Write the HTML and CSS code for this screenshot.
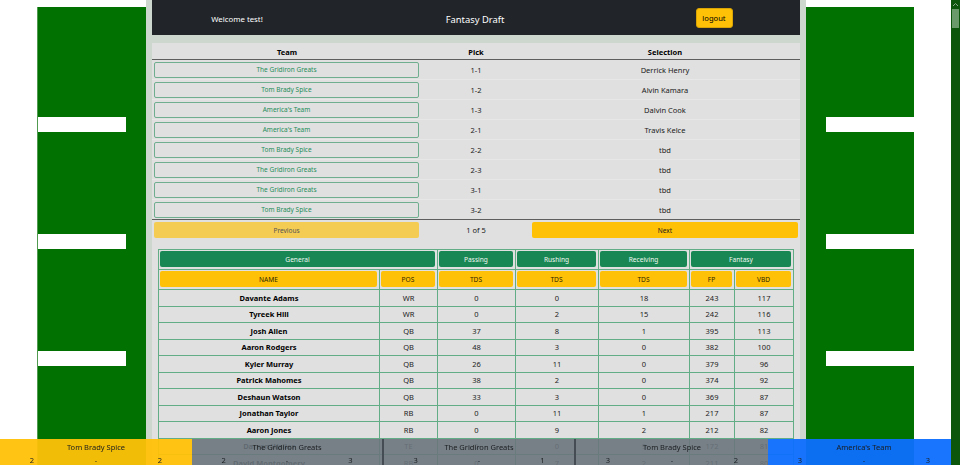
FILE: index.html
```html
<!DOCTYPE html>
<html lang="en">
<head>
<meta charset="utf-8">
<title>Fantasy Draft</title>
<link rel="stylesheet" href="styles.css">
</head>
<body>
<div class="page">
  <div class="field field-left">
    <div class="yard"></div><div class="yard"></div><div class="yard"></div>
  </div>
  <main class="main">
    <nav class="navbar">
      <div class="welcome">Welcome test!</div>
      <div class="brand">Fantasy Draft</div>
      <div class="nav-end"><button class="logout">logout</button></div>
    </nav>
    <section class="card">
      <div class="draft">
        <div class="dh">Team</div><div class="dh">Pick</div><div class="dh">Selection</div>

        <div class="dc team-cell"><button class="team-btn">The Gridiron Greats</button></div><div class="dc">1-1</div><div class="dc">Derrick Henry</div>
        <div class="dc team-cell"><button class="team-btn">Tom Brady Spice</button></div><div class="dc">1-2</div><div class="dc">Alvin Kamara</div>
        <div class="dc team-cell"><button class="team-btn">America's Team</button></div><div class="dc">1-3</div><div class="dc">Dalvin Cook</div>
        <div class="dc team-cell"><button class="team-btn">America's Team</button></div><div class="dc">2-1</div><div class="dc">Travis Kelce</div>
        <div class="dc team-cell"><button class="team-btn">Tom Brady Spice</button></div><div class="dc">2-2</div><div class="dc">tbd</div>
        <div class="dc team-cell"><button class="team-btn">The Gridiron Greats</button></div><div class="dc">2-3</div><div class="dc">tbd</div>
        <div class="dc team-cell"><button class="team-btn">The Gridiron Greats</button></div><div class="dc">3-1</div><div class="dc">tbd</div>
        <div class="dc team-cell last"><button class="team-btn">Tom Brady Spice</button></div><div class="dc last">3-2</div><div class="dc last">tbd</div>

        <div class="pc team-cell"><button class="page-btn prev">Previous</button></div>
        <div class="pc">1 of 5</div>
        <div class="pc next-cell"><button class="page-btn next">Next</button></div>
      </div>

      <div class="stats-wrap">
        <div class="stats">
          <div class="sh span2"><span class="box green">General</span></div>
          <div class="sh"><span class="box green">Passing</span></div>
          <div class="sh"><span class="box green">Rushing</span></div>
          <div class="sh"><span class="box green">Receiving</span></div>
          <div class="sh span2"><span class="box green">Fantasy</span></div>

          <div class="sh"><span class="box yellow">NAME</span></div>
          <div class="sh"><span class="box yellow">POS</span></div>
          <div class="sh"><span class="box yellow">TDS</span></div>
          <div class="sh"><span class="box yellow">TDS</span></div>
          <div class="sh"><span class="box yellow">TDS</span></div>
          <div class="sh"><span class="box yellow">FP</span></div>
          <div class="sh"><span class="box yellow">VBD</span></div>

          <div class="sd name">Davante Adams</div><div class="sd">WR</div><div class="sd">0</div><div class="sd">0</div><div class="sd">18</div><div class="sd">243</div><div class="sd">117</div>
          <div class="sd name">Tyreek Hill</div><div class="sd">WR</div><div class="sd">0</div><div class="sd">2</div><div class="sd">15</div><div class="sd">242</div><div class="sd">116</div>
          <div class="sd name">Josh Allen</div><div class="sd">QB</div><div class="sd">37</div><div class="sd">8</div><div class="sd">1</div><div class="sd">395</div><div class="sd">113</div>
          <div class="sd name">Aaron Rodgers</div><div class="sd">QB</div><div class="sd">48</div><div class="sd">3</div><div class="sd">0</div><div class="sd">382</div><div class="sd">100</div>
          <div class="sd name">Kyler Murray</div><div class="sd">QB</div><div class="sd">26</div><div class="sd">11</div><div class="sd">0</div><div class="sd">379</div><div class="sd">96</div>
          <div class="sd name">Patrick Mahomes</div><div class="sd">QB</div><div class="sd">38</div><div class="sd">2</div><div class="sd">0</div><div class="sd">374</div><div class="sd">92</div>
          <div class="sd name">Deshaun Watson</div><div class="sd">QB</div><div class="sd">33</div><div class="sd">3</div><div class="sd">0</div><div class="sd">369</div><div class="sd">87</div>
          <div class="sd name">Jonathan Taylor</div><div class="sd">RB</div><div class="sd">0</div><div class="sd">11</div><div class="sd">1</div><div class="sd">217</div><div class="sd">87</div>
          <div class="sd name">Aaron Jones</div><div class="sd">RB</div><div class="sd">0</div><div class="sd">9</div><div class="sd">2</div><div class="sd">212</div><div class="sd">82</div>
          <div class="sd name">Darren Waller</div><div class="sd">TE</div><div class="sd">0</div><div class="sd">0</div><div class="sd">9</div><div class="sd">172</div><div class="sd">81</div>
          <div class="sd name">David Montgomery</div><div class="sd">RB</div><div class="sd">0</div><div class="sd">7</div><div class="sd">2</div><div class="sd">211</div><div class="sd">80</div>
          <div class="sd name">Mike Evans</div><div class="sd">WR</div><div class="sd">0</div><div class="sd">0</div><div class="sd">13</div><div class="sd">220</div><div class="sd">78</div>
        </div>
      </div>
    </section>
  </main>
  <div class="field field-right">
    <div class="yard"></div><div class="yard"></div><div class="yard"></div>
  </div>
</div>

<div class="teambar">
  <div class="team t-yellow">
    <div class="team-name">Tom Brady Spice</div>
    <div class="team-score"><span>2</span><span>-</span><span>2</span></div>
  </div>
  <div class="team t-gray sep">
    <div class="team-name">The Gridiron Greats</div>
    <div class="team-score"><span>2</span><span>-</span><span>3</span></div>
  </div>
  <div class="team t-gray sep">
    <div class="team-name">The Gridiron Greats</div>
    <div class="team-score"><span>3</span><span>-</span><span>1</span></div>
  </div>
  <div class="team t-gray">
    <div class="team-name">Tom Brady Spice</div>
    <div class="team-score"><span>3</span><span>-</span><span>2</span></div>
  </div>
  <div class="team t-blue">
    <div class="team-name">America's Team</div>
    <div class="team-score"><span>3</span><span>-</span><span>3</span></div>
  </div>
</div>

<div class="scrollbar">
  <div class="sb-arrow"><svg width="9" height="9" viewBox="0 0 9 9"><path d="M2 6 L4.5 3.5 L7 6" fill="none" stroke="#8aa88a" stroke-width="1"/></svg></div>
  <div class="sb-thumb"></div>
</div>
</body>
</html>
```

FILE: styles.css
```css
html, body {
  margin: 0;
  padding: 0;
  overflow: hidden;
  background: #ffffff;
}

body {
  width: 960px;
  height: 465px;
  font-family: "Noto Sans", "DejaVu Sans", sans-serif;
  color: #111111;
}

.page {
  display: flex;
  width: 951px;
  padding: 0 37px;
  box-sizing: border-box;
}

/* football field sides */
.field {
  flex: none;
  margin-top: 7px;
  height: 600px;
  background: #017101;
  display: flex;
  flex-direction: column;
  padding-top: 110px;
  gap: 102px;
  box-sizing: border-box;
}

.field-left {
  width: 109px;
  align-items: flex-start;
  border-left: 1px solid #4f9a4f;
}

.field-right {
  width: 108px;
  align-items: flex-end;
}

.yard {
  flex: none;
  width: 88px;
  height: 15px;
  background: #ffffff;
}

/* main column */
.main {
  flex: none;
  width: 660px;
  min-height: 600px;
  background: #cdd7cd;
  padding: 0 6px;
  box-sizing: border-box;
}

.navbar {
  height: 35px;
  background: #212529;
  display: grid;
  grid-template-columns: 170px 1fr 172px;
  align-items: center;
  justify-items: center;
}

.welcome {
  color: #ffffff;
  font-size: 7.8px;
  padding-top: 3px;
}

.brand {
  color: #ffffff;
  font-size: 9.4px;
  padding-top: 3px;
}

.nav-end {
  padding-top: 1px;
}

.logout {
  display: block;
  width: 37px;
  height: 20px;
  padding: 0;
  background: #ffc107;
  border: 1px solid #d9a406;
  border-radius: 3px;
  font-family: "Noto Sans", "DejaVu Sans", sans-serif;
  font-size: 7.6px;
  color: #000000;
}

.card {
  margin-top: 8px;
  background: #e0e0e0;
  padding-bottom: 20px;
}

/* draft order */
.draft {
  display: grid;
  grid-template-columns: 270px 108px 270px;
  font-size: 7.5px;
}

.dh {
  height: 17px;
  box-sizing: border-box;
  border-bottom: 1px solid #5e5e5e;
  padding-top: 2px;
  font-weight: 700;
  display: flex;
  align-items: center;
  justify-content: center;
  color: #000000;
}

.dc {
  height: 20px;
  box-sizing: border-box;
  border-bottom: 1px solid #e7e7e7;
  display: flex;
  align-items: center;
  justify-content: center;
  color: #1a1a1a;
}

.dc.last {
  border-bottom: 1px solid #5e5e5e;
}

.team-cell {
  padding: 0 3px 0 2px;
  justify-content: stretch;
}

.team-btn {
  display: block;
  width: 100%;
  height: 16px;
  padding: 0;
  background: transparent;
  border: 1px solid #6fae8f;
  border-radius: 2px;
  color: #1f8d59;
  font-family: "Noto Sans", "DejaVu Sans", sans-serif;
  font-size: 6.5px;
}

.pc {
  height: 20px;
  display: flex;
  align-items: center;
  justify-content: center;
  color: #1a1a1a;
}

.next-cell {
  padding: 0 2px 0 2px;
}

.page-btn {
  display: block;
  width: 100%;
  height: 16px;
  padding: 0;
  border: none;
  border-radius: 2px;
  font-family: "Noto Sans", "DejaVu Sans", sans-serif;
  font-size: 6.5px;
}

.prev {
  background: #f4cc53;
  color: #555555;
}

.next {
  background: #ffc107;
  color: #1a1a1a;
}

/* stats */
.stats-wrap {
  padding: 9px 6px 0 6px;
}

.stats {
  display: grid;
  grid-template-columns: 220px 57px 77px 82px 90px 44px 58px;
  grid-template-rows: 19px 19px;
  grid-auto-rows: 15.5px;
  gap: 1px;
  padding: 1px;
  width: max-content;
  background: #62ad86;
  font-size: 7.5px;
}

.sh {
  background: #e0e0e0;
  padding: 1px 2px 2px 1px;
  display: flex;
}

.span2 {
  grid-column: span 2;
}

.box {
  flex: 1;
  display: flex;
  align-items: center;
  justify-content: center;
  border-radius: 2px;
  font-size: 6.6px;
}

.box.green {
  background: #198754;
  color: #f0f7f2;
}

.box.yellow {
  background: #ffc107;
  color: #2e2600;
}

.sd {
  background: #e0e0e0;
  display: flex;
  align-items: center;
  justify-content: center;
  color: #222222;
}

.sd.name {
  font-weight: 700;
  color: #000000;
}

/* bottom team bar */
.teambar {
  position: fixed;
  left: 0;
  bottom: 0;
  width: 960px;
  height: 26px;
  display: grid;
  grid-template-columns: repeat(5, 192px);
  font-size: 7.5px;
  color: #1a1d20;
}

.team {
  display: flex;
  flex-direction: column;
  box-sizing: border-box;
}

.t-yellow { background: rgba(255, 193, 7, 0.95); }
.t-gray { background: rgba(108, 117, 125, 0.9); }
.t-blue { background: rgba(13, 110, 253, 0.95); }

.sep {
  border-right: 2px solid #454c53;
}

.team-name {
  height: 16px;
  display: flex;
  align-items: center;
  justify-content: center;
}

.team-score {
  height: 10px;
  display: grid;
  grid-template-columns: repeat(3, 1fr);
  align-items: center;
  justify-items: center;
}

/* window scrollbar (green themed) */
.scrollbar {
  position: fixed;
  top: 0;
  right: 0;
  width: 9px;
  height: 465px;
  background: #0b560b;
}

.sb-arrow {
  height: 9px;
}

.sb-arrow svg {
  display: block;
}

.sb-thumb {
  margin: 0 1px;
  height: 19px;
  background: #6a9a6a;
}
```
